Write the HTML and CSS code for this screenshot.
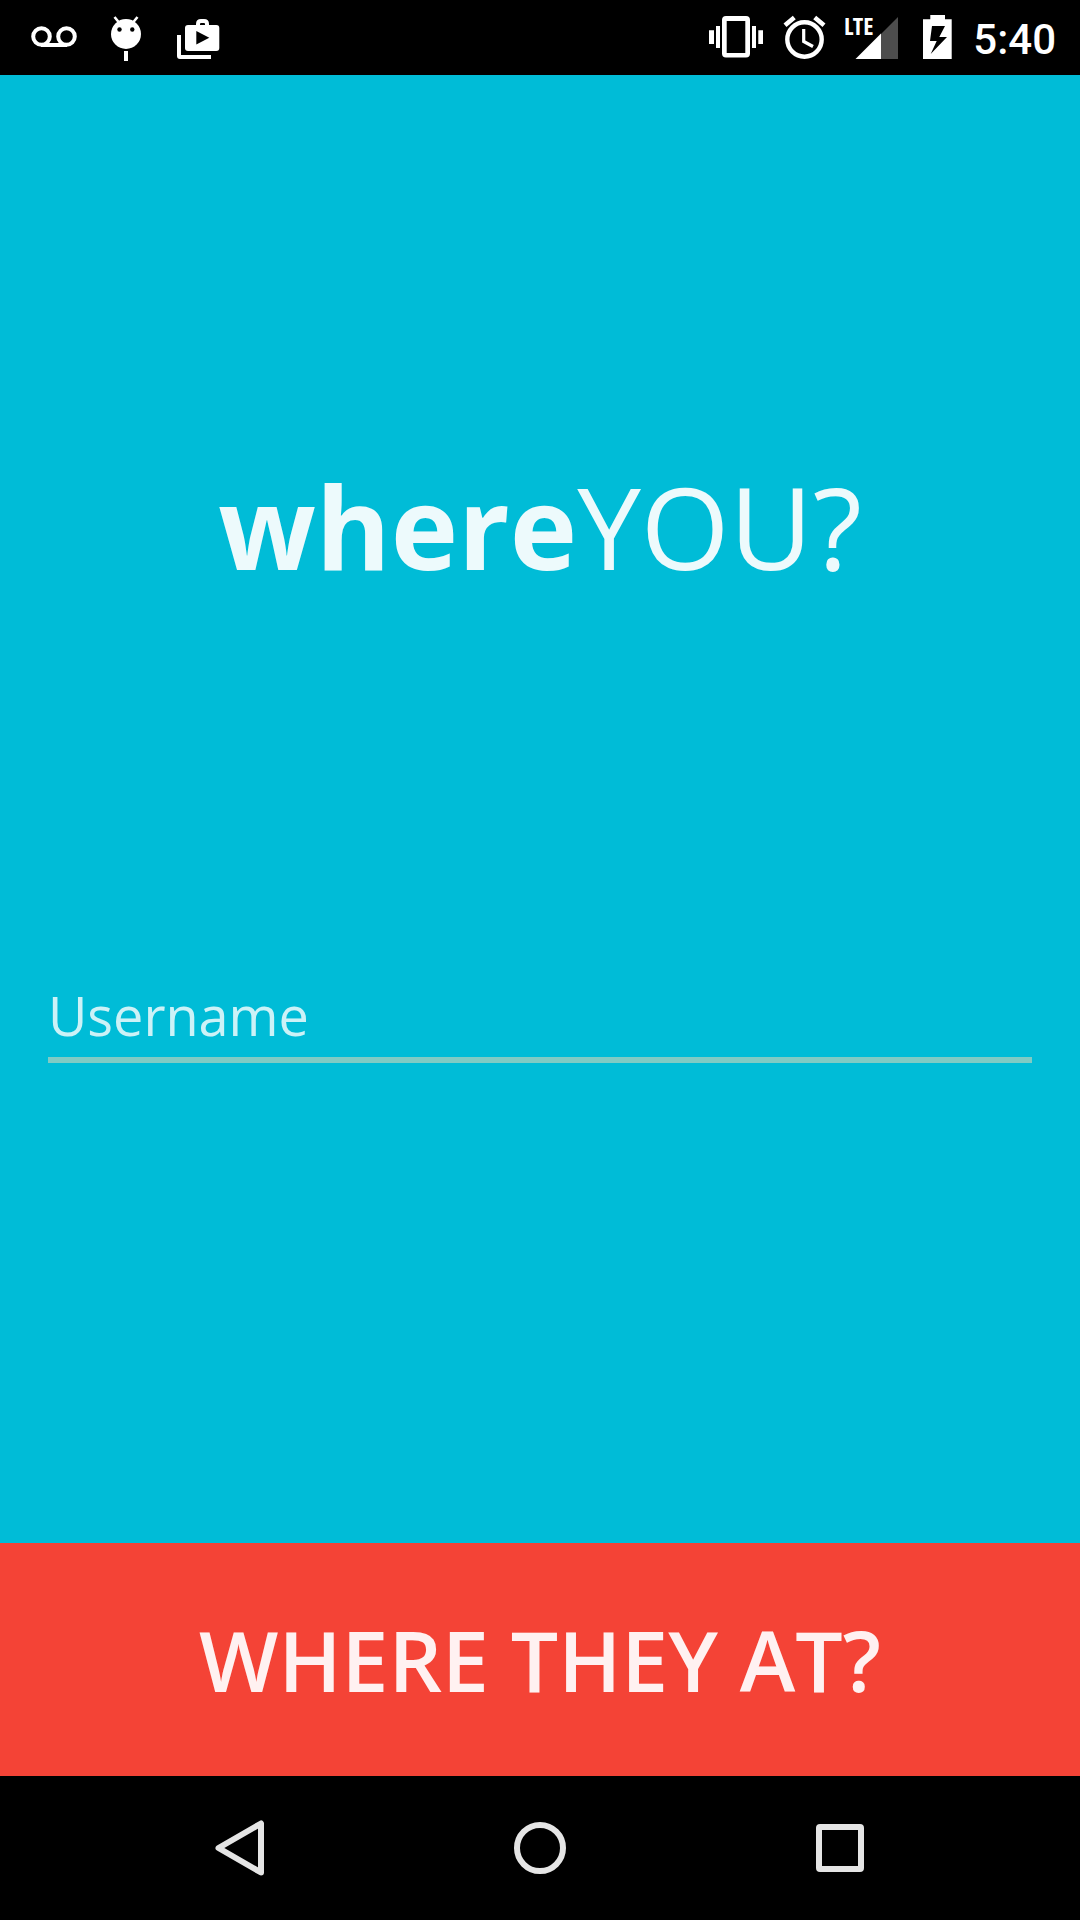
FILE: index.html
```html
<!DOCTYPE html>
<html lang="en">
<head>
<meta charset="utf-8">
<meta name="viewport" content="width=device-width, initial-scale=1">
<title>whereYOU?</title>
<link rel="stylesheet" href="styles.css">
</head>
<body>
<header class="status">
  <div class="status-group">
    <svg class="notice-icon" viewBox="0 0 72 75" aria-label="Voicemail"><g fill="none" stroke="#fff" stroke-width="4"><circle cx="23.500" cy="36.500" r="8.300"/><circle cx="48.500" cy="36.500" r="8.300"/><path d="M23 45h26"/></g></svg>
    <svg class="notice-icon" viewBox="0 0 72 75" aria-label="Android debugging"><g fill="#fff"><circle cx="36" cy="34" r="15"/><path d="M34 51h4v10h-4z"/><path d="M24.500 17l4.500 5.500M47.500 17L43 22.500" stroke="#fff" stroke-width="2.600"/></g><circle cx="29.500" cy="29.500" r="2.200"/><circle cx="42.300" cy="29.500" r="2.200"/></svg>
    <svg class="notice-icon" viewBox="0 0 72 75" aria-label="Play Store"><path d="M36 26v-2q0-3 3-3h3q3 0 3 3v2" fill="none" stroke="#fff" stroke-width="4"/><path fill="#fff" d="M26 25h28.300q3 0 3 3v20q0 3-3 3H26q-3 0-3-3V28q0-3 3-3z"/><path d="M34.300 31v13.500l13-6.750z"/><path fill="#fff" d="M15 35h4v20h30v4H18q-3 0-3-3z"/></svg>
  </div>
  <div class="status-group status-system">
    <svg class="system-icon" viewBox="702 0 68 75" aria-label="Vibrate"><path fill="#fff" fill-rule="evenodd" d="M726 16h20q4 0 4 4v33.500q0 4-4 4h-20q-4 0-4-4V20q0-4 4-4zm.700 5v32h18.600V21z"/><path fill="#fff" d="M709 30.300h5V44h-5zM716 26h4v22h-4zM752 26h4v22h-4zM758.300 30.300h4.700V44h-4.700z"/></svg>
    <svg class="system-icon" viewBox="770 0 68 75" aria-label="Alarm"><g fill="none" stroke="#fff"><circle cx="804.500" cy="39.500" r="17.200" stroke-width="4.400"/><path d="M803.700 29v12.500l9.300 5" stroke-width="3.200"/><path d="M785 25.300l9.300-7.800M824 25.300l-9.300-7.800" stroke-width="4.600"/></g></svg>
    <svg class="system-icon" viewBox="838 0 68 75" aria-label="LTE signal"><path fill="#4d4d4d" d="M898 17v42h-17V34z"/><path fill="#fff" d="M855.500 59L881 33.500V59z"/><text class="network" x="844" y="35">LTE</text></svg>
    <svg class="battery-icon" viewBox="906 0 62 75" aria-label="Battery charging"><path fill="#fff" fill-rule="evenodd" d="M930.300 15h14.700v4.300h6.700V59H923V19.300h7.300zM932 26l-2 15h6.700l-6 13 16.300-17h-7.700l5.700-11z"/></svg>
    <time class="clock">5:40</time>
  </div>
</header>
<main class="screen">
  <h1 class="brand"><span><b>where</b>YOU?</span></h1>
  <form class="login" id="login">
    <input class="username" type="text" name="username" placeholder="Username" aria-label="Username">
  </form>
  <button class="submit" type="submit" form="login">WHERE THEY AT?</button>
</main>
<nav class="navbar">
  <button class="nav-button" type="button" aria-label="Back"><svg class="nav-icon" viewBox="0 0 72 72"><path d="M57 11.500v49L14.500 36z"/></svg></button>
  <button class="nav-button" type="button" aria-label="Home"><svg class="nav-icon" viewBox="0 0 72 72"><circle cx="36" cy="36" r="23"/></svg></button>
  <button class="nav-button" type="button" aria-label="Recent apps"><svg class="nav-icon" viewBox="0 0 72 72"><rect x="15" y="15" width="42" height="42" rx="1"/></svg></button>
</nav>
</body>
</html>
```
FILE: styles.css
```css
* {
  box-sizing: border-box;
}

body {
  margin: 0;
  min-height: 100vh;
  display: flex;
  flex-direction: column;
  background: #00bcd7;
  font-family: "Open Sans", sans-serif;
}

svg {
  display: block;
}

.status {
  display: flex;
  justify-content: space-between;
  padding: 0 24px 0 18px;
  background: #000;
}

.status-group {
  display: flex;
  align-items: center;
}

.notice-icon {
  width: 72px;
  height: 75px;
}

.system-icon {
  width: 68px;
  height: 75px;
}

.battery-icon {
  width: 62px;
  height: 75px;
}

.network {
  fill: #fff;
  font: 700 24px "Open Sans Condensed", "Noto Sans ExtraCondensed", "Roboto Condensed", "Liberation Sans Narrow", sans-serif;
}

.clock {
  margin-left: 5px;
  color: #fff;
  font: 500 42px/80px Roboto, sans-serif;
  height: 75px;
}

.screen {
  flex: 1;
  display: flex;
  flex-direction: column;
}

.brand {
  flex: 1;
  display: flex;
  align-items: center;
  justify-content: center;
  margin: 0;
  padding-bottom: 2px;
  color: rgba(255, 255, 255, 0.93);
  font-size: 114px;
  font-weight: 400;
  line-height: 156px;
}

.login {
  padding: 0 48px;
  margin-bottom: 25vh;
}

.username {
  display: block;
  width: 100%;
  height: 85px;
  padding: 0 0 5px;
  border: 0;
  border-bottom: 6px solid #80cbc4;
  border-radius: 0;
  outline: 0;
  background: none;
  color: #fff;
  font: 400 54px/74px "Open Sans", sans-serif;
}

.username::placeholder {
  color: rgba(255, 255, 255, 0.8);
  opacity: 1;
}

.submit {
  height: 233px;
  padding: 0;
  border: 0;
  background: #f44336;
  color: rgba(255, 255, 255, 0.93);
  font: 600 84px/114px "Open Sans", sans-serif;
}

.navbar {
  display: flex;
  padding: 0 8.3333%;
  background: #000;
}

.nav-button {
  flex: 1;
  display: flex;
  align-items: center;
  justify-content: center;
  height: 144px;
  padding: 0;
  border: 0;
  background: none;
}

.nav-icon {
  width: 72px;
  height: 72px;
  fill: none;
  stroke: #e5e5e5;
  stroke-width: 6px;
  stroke-linejoin: round;
}
```
